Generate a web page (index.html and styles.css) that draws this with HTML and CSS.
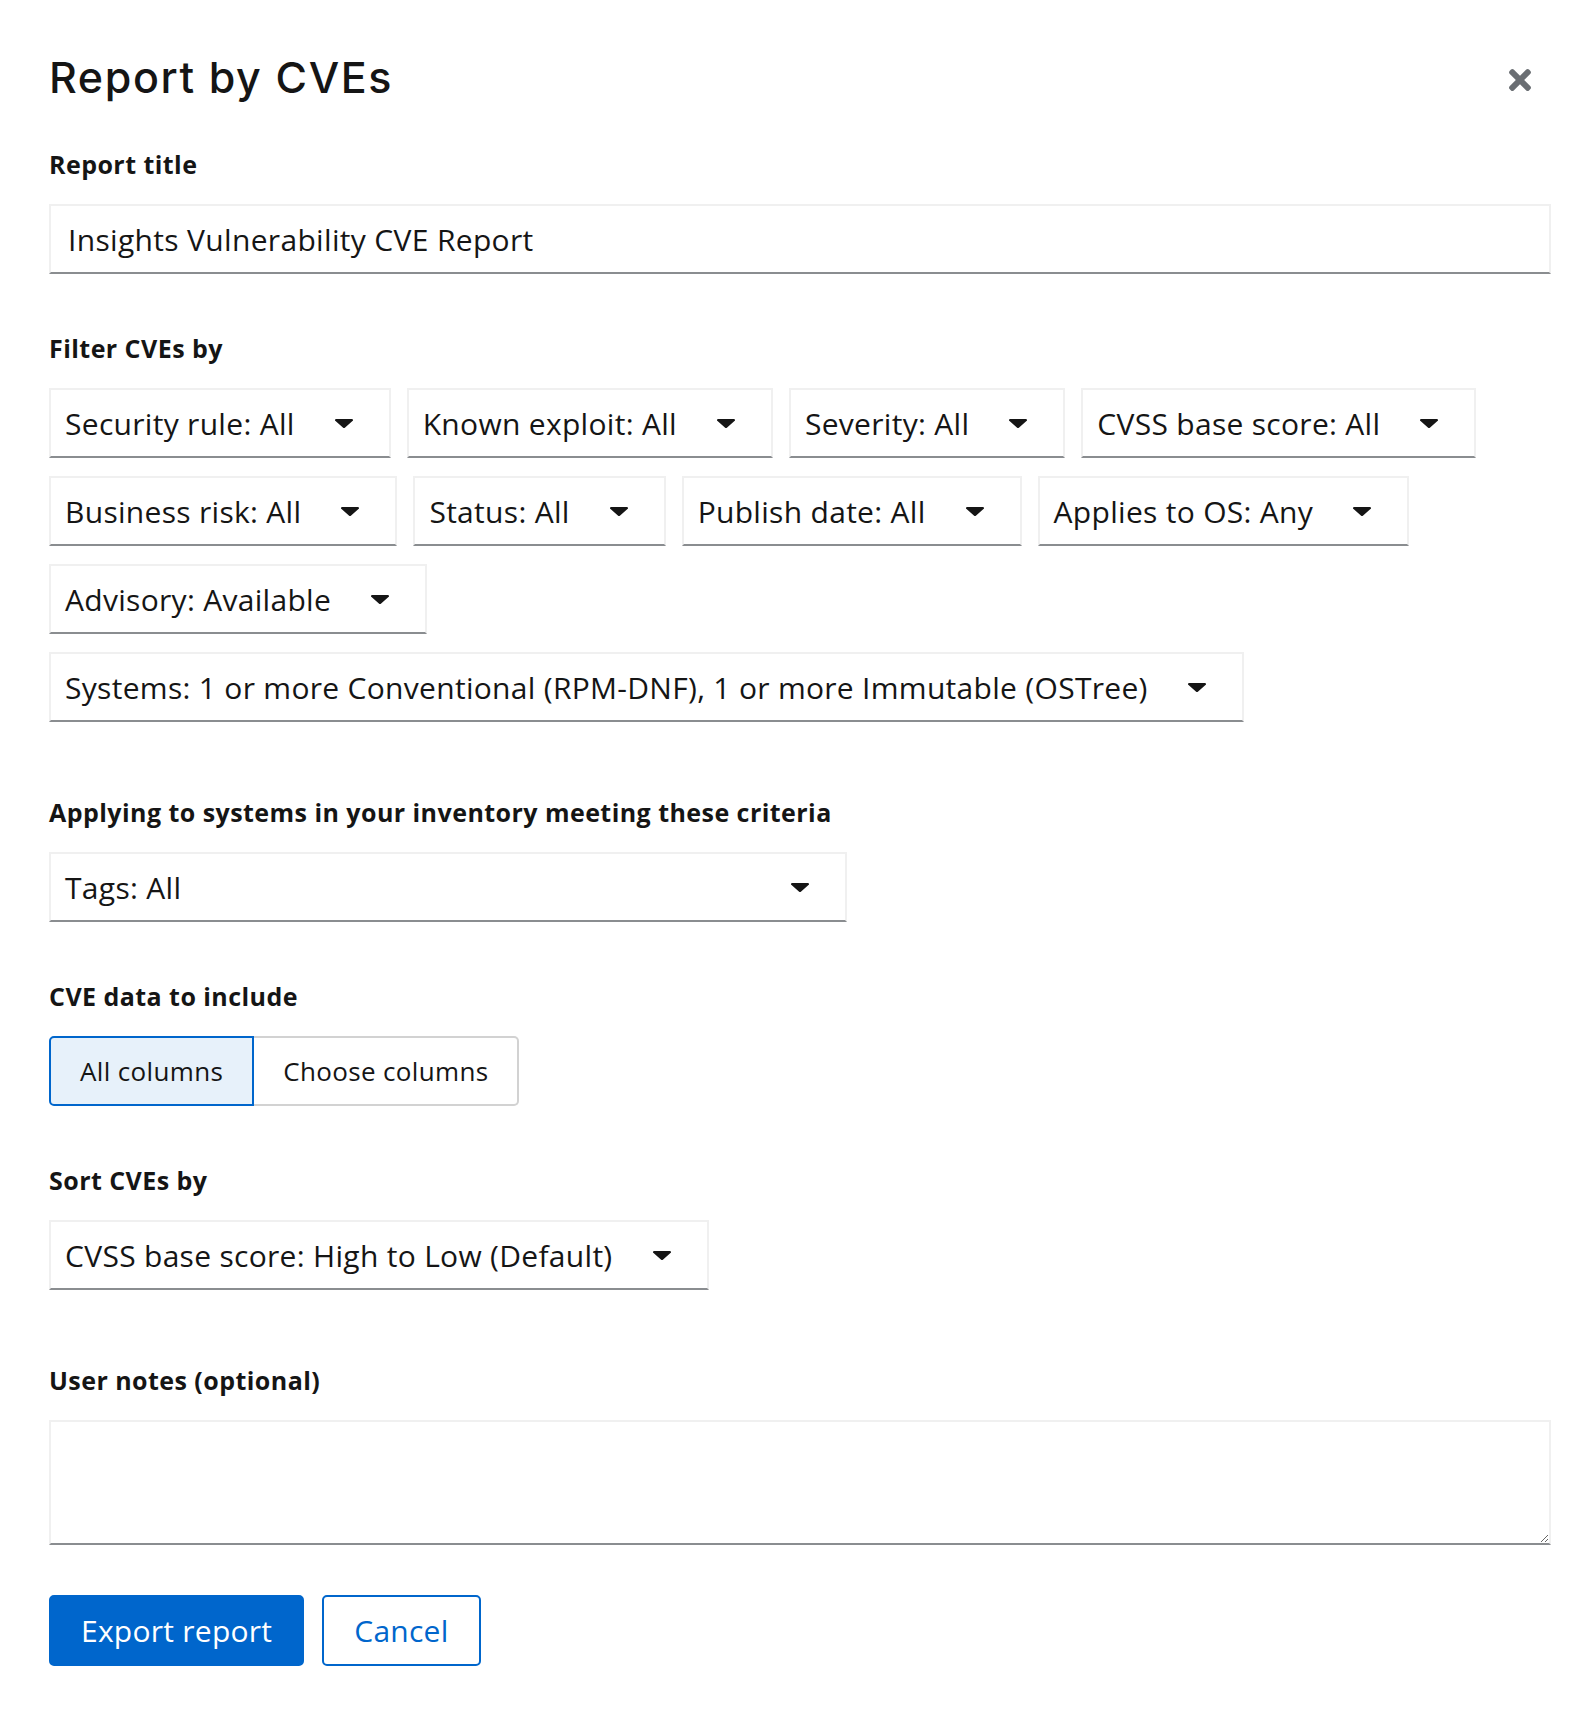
FILE: index.html
```html
<!DOCTYPE html>
<html lang="en">
<head>
<meta charset="utf-8">
<title>Report by CVEs</title>
<link rel="stylesheet" href="styles.css">
</head>
<body>
<div class="modal">
  <header class="modal-header">
    <h1 class="modal-title">Report by CVEs</h1>
    <button class="close-btn" type="button" aria-label="Close">
      <svg class="close-icon" viewBox="0 80 352 352" aria-hidden="true"><path d="M242.72 256l100.07-100.07c12.28-12.28 12.28-32.19 0-44.48l-22.24-22.24c-12.28-12.28-32.19-12.28-44.48 0L176 189.28 75.93 89.21c-12.28-12.28-32.19-12.28-44.48 0L9.21 111.45c-12.28 12.28-12.28 32.19 0 44.48L109.28 256 9.21 356.07c-12.28 12.28-12.28 32.19 0 44.48l22.24 22.24c12.28 12.28 32.2 12.28 44.48 0L176 322.72l100.07 100.07c12.28 12.28 32.2 12.28 44.48 0l22.24-22.24c12.28-12.28 12.28-32.19 0-44.48L242.72 256z"/></svg>
    </button>
  </header>

  <form class="form">
    <div class="group">
      <label class="label" for="title">Report title</label>
      <input id="title" class="text-input" type="text" value="Insights Vulnerability CVE Report">
    </div>

    <div class="group group-extra">
      <div class="label">Filter CVEs by</div>
      <div class="filters">
        <div class="filter-row">
          <button type="button" class="select"><span class="select-text">Security rule: All</span><svg class="caret" viewBox="13 192 294 169" preserveAspectRatio="none"><path d="M31.3 192h257.3c17.8 0 26.7 21.5 14.1 34.1L174.1 354.8c-7.8 7.8-20.5 7.8-28.3 0L17.2 226.1C4.6 213.5 13.5 192 31.3 192z"/></svg></button>
          <button type="button" class="select"><span class="select-text">Known exploit: All</span><svg class="caret" viewBox="13 192 294 169" preserveAspectRatio="none"><path d="M31.3 192h257.3c17.8 0 26.7 21.5 14.1 34.1L174.1 354.8c-7.8 7.8-20.5 7.8-28.3 0L17.2 226.1C4.6 213.5 13.5 192 31.3 192z"/></svg></button>
          <button type="button" class="select"><span class="select-text">Severity: All</span><svg class="caret" viewBox="13 192 294 169" preserveAspectRatio="none"><path d="M31.3 192h257.3c17.8 0 26.7 21.5 14.1 34.1L174.1 354.8c-7.8 7.8-20.5 7.8-28.3 0L17.2 226.1C4.6 213.5 13.5 192 31.3 192z"/></svg></button>
          <button type="button" class="select"><span class="select-text">CVSS base score: All</span><svg class="caret" viewBox="13 192 294 169" preserveAspectRatio="none"><path d="M31.3 192h257.3c17.8 0 26.7 21.5 14.1 34.1L174.1 354.8c-7.8 7.8-20.5 7.8-28.3 0L17.2 226.1C4.6 213.5 13.5 192 31.3 192z"/></svg></button>
        </div>
        <div class="filter-row">
          <button type="button" class="select"><span class="select-text">Business risk: All</span><svg class="caret" viewBox="13 192 294 169" preserveAspectRatio="none"><path d="M31.3 192h257.3c17.8 0 26.7 21.5 14.1 34.1L174.1 354.8c-7.8 7.8-20.5 7.8-28.3 0L17.2 226.1C4.6 213.5 13.5 192 31.3 192z"/></svg></button>
          <button type="button" class="select"><span class="select-text">Status: All</span><svg class="caret" viewBox="13 192 294 169" preserveAspectRatio="none"><path d="M31.3 192h257.3c17.8 0 26.7 21.5 14.1 34.1L174.1 354.8c-7.8 7.8-20.5 7.8-28.3 0L17.2 226.1C4.6 213.5 13.5 192 31.3 192z"/></svg></button>
          <button type="button" class="select"><span class="select-text">Publish date: All</span><svg class="caret" viewBox="13 192 294 169" preserveAspectRatio="none"><path d="M31.3 192h257.3c17.8 0 26.7 21.5 14.1 34.1L174.1 354.8c-7.8 7.8-20.5 7.8-28.3 0L17.2 226.1C4.6 213.5 13.5 192 31.3 192z"/></svg></button>
          <button type="button" class="select"><span class="select-text">Applies to OS: Any</span><svg class="caret" viewBox="13 192 294 169" preserveAspectRatio="none"><path d="M31.3 192h257.3c17.8 0 26.7 21.5 14.1 34.1L174.1 354.8c-7.8 7.8-20.5 7.8-28.3 0L17.2 226.1C4.6 213.5 13.5 192 31.3 192z"/></svg></button>
        </div>
        <div class="filter-row">
          <button type="button" class="select"><span class="select-text">Advisory: Available</span><svg class="caret" viewBox="13 192 294 169" preserveAspectRatio="none"><path d="M31.3 192h257.3c17.8 0 26.7 21.5 14.1 34.1L174.1 354.8c-7.8 7.8-20.5 7.8-28.3 0L17.2 226.1C4.6 213.5 13.5 192 31.3 192z"/></svg></button>
        </div>
        <div class="filter-row">
          <button type="button" class="select"><span class="select-text">Systems: 1 or more Conventional (RPM-DNF), 1 or more Immutable (OSTree)</span><svg class="caret" viewBox="13 192 294 169" preserveAspectRatio="none"><path d="M31.3 192h257.3c17.8 0 26.7 21.5 14.1 34.1L174.1 354.8c-7.8 7.8-20.5 7.8-28.3 0L17.2 226.1C4.6 213.5 13.5 192 31.3 192z"/></svg></button>
        </div>
      </div>
    </div>

    <div class="group">
      <div class="label">Applying to systems in your inventory meeting these criteria</div>
      <button type="button" class="select select-wide"><span class="select-text">Tags: All</span><svg class="caret" viewBox="13 192 294 169" preserveAspectRatio="none"><path d="M31.3 192h257.3c17.8 0 26.7 21.5 14.1 34.1L174.1 354.8c-7.8 7.8-20.5 7.8-28.3 0L17.2 226.1C4.6 213.5 13.5 192 31.3 192z"/></svg></button>
    </div>

    <div class="group">
      <div class="label">CVE data to include</div>
      <div class="toggle-group">
        <button type="button" class="toggle toggle-selected">All columns</button>
        <button type="button" class="toggle">Choose columns</button>
      </div>
    </div>

    <div class="group group-extra">
      <div class="label">Sort CVEs by</div>
      <button type="button" class="select"><span class="select-text">CVSS base score: High to Low (Default)</span><svg class="caret" viewBox="13 192 294 169" preserveAspectRatio="none"><path d="M31.3 192h257.3c17.8 0 26.7 21.5 14.1 34.1L174.1 354.8c-7.8 7.8-20.5 7.8-28.3 0L17.2 226.1C4.6 213.5 13.5 192 31.3 192z"/></svg></button>
    </div>

    <div class="group">
      <label class="label" for="notes">User notes (optional)</label>
      <textarea id="notes" class="textarea"></textarea>
    </div>
  </form>

  <footer class="actions">
    <button type="button" class="btn btn-primary">Export report</button>
    <button type="button" class="btn btn-link">Cancel</button>
  </footer>
</div>
</body>
</html>
```

FILE: styles.css
```css
* {
  box-sizing: border-box;
}

html, body {
  margin: 0;
  background: #ffffff;
}

body {
  font-family: "Open Sans", "Liberation Sans", sans-serif;
  color: #151515;
}

.modal {
  padding: 50px 43px 40px 49px;
}

.modal-header {
  display: flex;
  align-items: flex-start;
  justify-content: space-between;
  margin-bottom: 36px;
}

.modal-title {
  margin: 2px 0 0;
  font-family: Inter, "Open Sans", sans-serif;
  font-size: 43px;
  font-weight: 500;
  line-height: 50px;
  letter-spacing: 1.6px;
  color: #151515;
}

.close-btn {
  width: 62px;
  height: 60px;
  padding: 0;
  border: 0;
  background: transparent;
  display: flex;
  align-items: center;
  justify-content: center;
}

.close-icon {
  width: 22px;
  height: 22px;
  fill: #6a6e73;
}

.form {
  display: flex;
  flex-direction: column;
  gap: 56px;
}

.group {
  display: flex;
  flex-direction: column;
  align-items: flex-start;
  gap: 22px;
}

.group-extra {
  padding-bottom: 16px;
}

.label {
  font-size: 25px;
  font-weight: 700;
  line-height: 36px;
  letter-spacing: 0.45px;
  color: #151515;
}

.text-input {
  width: 100%;
  height: 70px;
  padding: 0 17px;
  border: 2px solid #f0f0f0;
  border-bottom-color: #8a8d90;
  font-family: inherit;
  font-size: 30px;
  letter-spacing: 0.33px;
  color: #151515;
  background: #ffffff;
  outline: none;
}

.filters {
  display: flex;
  flex-direction: column;
  gap: 18px;
}

.filter-row {
  display: flex;
  gap: 16px;
}

.select {
  display: flex;
  align-items: center;
  gap: 40px;
  height: 70px;
  padding: 0 36px 0 14px;
  border: 2px solid #f0f0f0;
  border-bottom-color: #8a8d90;
  background: #ffffff;
  font-family: inherit;
  font-size: 30px;
  letter-spacing: 0.3px;
  color: #151515;
  white-space: nowrap;
  cursor: pointer;
}

.select-wide {
  width: 798px;
}

.select-wide .select-text {
  flex: 1;
  text-align: left;
}

.caret {
  width: 18px;
  height: 9px;
  fill: #151515;
  flex: none;
}

.toggle-group {
  display: flex;
}

.toggle {
  height: 70px;
  padding: 0 29px;
  border: 2px solid #d2d2d2;
  background: #ffffff;
  font-family: inherit;
  font-size: 26px;
  letter-spacing: 0.35px;
  color: #151515;
  cursor: pointer;
}

.toggle:first-child {
  border-radius: 5px 0 0 5px;
}

.toggle:last-child {
  border-radius: 0 5px 5px 0;
  border-left: 0;
}

.toggle-selected {
  background: #e7f1fa;
  border-color: #0066cc;
}

.textarea {
  display: block;
  width: 100%;
  height: 125px;
  padding: 10px 17px;
  border: 2px solid #f0f0f0;
  border-bottom-color: #8a8d90;
  font-family: inherit;
  font-size: 30px;
  resize: vertical;
  outline: none;
}

.actions {
  display: flex;
  gap: 18px;
  margin-top: 50px;
}

.btn {
  height: 71px;
  padding: 0 30px;
  border-radius: 5px;
  font-family: inherit;
  font-size: 30px;
  letter-spacing: 0.25px;
  cursor: pointer;
}

.btn-primary {
  background: #0066cc;
  border: 2px solid #0066cc;
  color: #ffffff;
}

.btn-link {
  background: #ffffff;
  border: 2px solid #0066cc;
  color: #0066cc;
}
```
